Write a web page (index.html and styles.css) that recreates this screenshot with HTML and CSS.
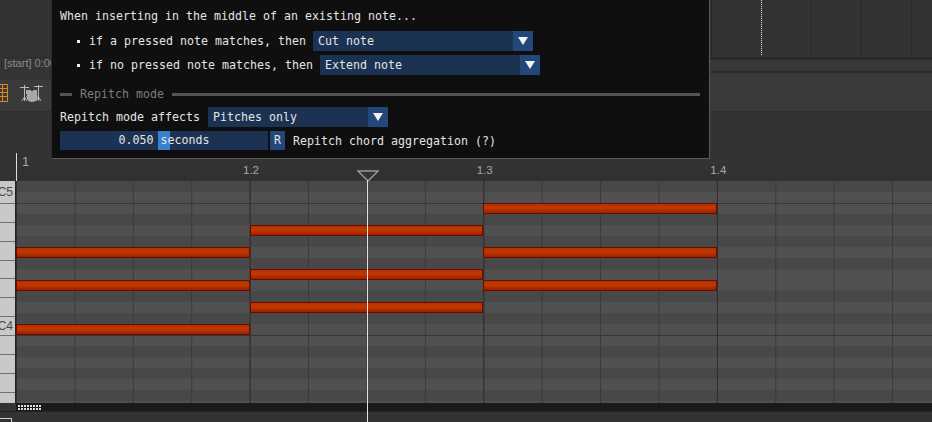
FILE: index.html
```html
<!DOCTYPE html>
<html lang="en">
<head>
    <meta charset="UTF-8">
    <meta name="viewport" content="width=device-width, initial-scale=1.0">
    <title>Piano Roll</title>
    <link rel="stylesheet" href="styles.css">
</head>
<body>
    <div class="app">
        <div class="tracks">
            <i class="tick"></i>
            <i class="tick tick-on"></i>
            <i class="tick"></i>
            <i class="tick"></i>
            <i class="tick"></i>
        </div>
        <div class="band"></div>
        <div class="toolbar">
            <svg class="icon-roll" width="9" height="18" viewBox="0 0 9 18">
                <path d="M0 .5H7.5V17.5H0M0 4.5H7.5M0 8.5H7.5M0 12.5H7.5M2.5 1V17" fill="none" stroke="#d8891c"/>
            </svg>
            <svg class="icon-drums" width="24" height="18" viewBox="0 0 24 18">
                <path d="M0 3.5H9M14 2.5H23M4.5 1V17M18.5 1V17M2 17L4.5 13L7 17M16 17L18.5 13L21 17" fill="none" stroke="#b8b8b8"/>
                <rect x="6" y="6" width="5" height="4" fill="#aaa"/>
                <rect x="13" y="6" width="4" height="4" fill="#aaa"/>
                <circle cx="12" cy="12.5" r="5.5" fill="#a8a8a8"/>
            </svg>
        </div>
        <div class="ruler">
            <span class="ruler-first">1</span>
            <span class="ruler-label">1.2</span>
            <span class="ruler-label">1.3</span>
            <span class="ruler-label">1.4</span>
        </div>
        <div class="roll">
            <div class="keys">
                <div class="key key-top"><span>C5</span></div>
                <div class="key"></div>
                <div class="key"></div>
                <div class="key"></div>
                <div class="key"></div>
                <div class="key"></div>
                <div class="key"></div>
                <div class="key key-c4"><span>C4</span></div>
                <div class="key"></div>
                <div class="key"></div>
                <div class="key"></div>
                <div class="key"></div>
            </div>
            <div class="notes">
                <div class="note bar-1 row-7"></div>
                <div class="note bar-1 row-10"></div>
                <div class="note bar-1 row-14"></div>
                <div class="note bar-2 row-5"></div>
                <div class="note bar-2 row-9"></div>
                <div class="note bar-2 row-12"></div>
                <div class="note bar-3 row-3"></div>
                <div class="note bar-3 row-7"></div>
                <div class="note bar-3 row-10"></div>
            </div>
        </div>
        <div class="scrollbar">
            <div class="grip"></div>
        </div>
        <div class="footer"><div class="footer-box"></div></div>

        <div class="region-box">[start] 0:00</div>

        <div class="playhead">
            <svg width="22" height="12" viewBox="0 0 22 12">
                <path d="M1 1H21L11 11Z" fill="#333" stroke="#9a9a9a" stroke-width="1.4"/>
            </svg>
        </div>

        <div class="popup">
            <div class="line line-first">When inserting in the middle of an existing note...</div>
            <div class="line line-bullet">
                <i class="bullet"></i>
                <span>if a pressed note matches, then</span>
                <div class="combo"><span>Cut note</span><b class="combo-arrow"></b></div>
            </div>
            <div class="line line-bullet">
                <i class="bullet"></i>
                <span>if no pressed note matches, then</span>
                <div class="combo"><span>Extend note</span><b class="combo-arrow"></b></div>
            </div>
            <div class="line separator">
                <i class="sep-short"></i>
                <span>Repitch mode</span>
                <i class="sep-long"></i>
            </div>
            <div class="line">
                <span>Repitch mode affects</span>
                <div class="combo combo-short"><span>Pitches only</span><b class="combo-arrow"></b></div>
            </div>
            <div class="line line-last">
                <div class="slider">0.050 seconds</div>
                <div class="reset">R</div>
                <span class="slider-label">Repitch chord aggregation (?)</span>
            </div>
        </div>
    </div>
</body>
</html>
```

FILE: styles.css
```css
body {
    margin: 0;
    background-color: #333;
}
.app {
    position: relative;
    width: 932px;
    height: 422px;
    overflow: hidden;
    display: flex;
    flex-direction: column;
    background-color: #333;
    font-family: "Liberation Sans", Arial, sans-serif;
}

/* top strip */
.tracks {
    height: 60px;
    box-sizing: border-box;
    padding-left: 711px;
    display: flex;
    gap: 49px;
    border-bottom: 3px solid #2a2a2a;
}
.tick {
    width: 1px;
    height: 56px;
    background: repeating-linear-gradient(to bottom, #1d1d1d 0 1px, transparent 1px 2px);
}
.tick-on {
    background: repeating-linear-gradient(to bottom, #eee 0 1px, transparent 1px 2px);
}
.band {
    height: 11px;
    background-color: #383838;
    border-bottom: 2px solid #2b2b2b;
}
.region-box {
    position: absolute;
    left: 0;
    top: 57px;
    width: 51px;
    height: 23px;
    box-sizing: border-box;
    padding-left: 4px;
    overflow: hidden;
    white-space: nowrap;
    background-color: #343434;
    border-top: 1px solid #2c2c2c;
    font-size: 11px;
    line-height: 11px;
    color: #8a8a8a;
}
.toolbar {
    height: 37px;
    padding-top: 1px;
    background-color: #3a3a3a;
    display: flex;
    align-items: center;
}
.icon-roll {
    margin-right: 11px;
}

/* timeline */
.ruler {
    height: 70px;
    box-sizing: border-box;
    border-top: 1px solid #2e2e2e;
    padding-left: 16px;
    display: flex;
    align-items: flex-end;
    font-size: 11.5px;
    color: #a8a8a8;
    background: linear-gradient(to bottom, #333 50px, #303030);
}
.ruler-first {
    flex: none;
    width: 227px;
    height: 28px;
    box-sizing: border-box;
    border-left: 1px solid #ddd;
    padding: 1px 0 0 5px;
    font-size: 13px;
    line-height: 16px;
}
.ruler-label {
    flex: none;
    width: 233.67px;
    height: 22px;
    line-height: 22px;
}
.roll {
    height: 222px;
    display: flex;
}
.keys {
    width: 15px;
    flex: none;
    border-right: 1px solid #222;
    background-color: #c8c8c8;
    display: flex;
    flex-direction: column;
    overflow: hidden;
}
.key {
    flex: none;
    height: 18.86px;
    box-sizing: border-box;
    border-bottom: 1px solid #707070;
    display: flex;
    align-items: flex-end;
    justify-content: flex-end;
    font-size: 12px;
    line-height: 12px;
    color: #4a4a4a;
}
.key span {
    padding-bottom: 3px;
    padding-right: 2px;
}
.key-top {
    height: 23px;
}
.key-top span {
    padding-bottom: 5px;
}
.notes {
    flex: 1;
    display: grid;
    grid-template-columns: repeat(3, 233.67px);
    grid-template-rows: repeat(20, 11px);
    background-image:
        linear-gradient(to right, #2f2f2f 1px, transparent 1px),
        linear-gradient(to right, #3a3a3a 1px, transparent 1px),
        linear-gradient(to bottom, #363636 1px, transparent 1px),
        linear-gradient(to bottom,
            #505050 0 11px, #484848 11px 22px,
            #505050 22px 33px, #484848 33px 44px,
            #505050 44px 55px, #484848 55px 66px,
            #505050 66px 88px, #484848 88px 99px,
            #505050 99px 110px, #484848 110px 121px,
            #505050 121px 132px);
    background-size: 233.67px 100%, 58.417px 100%, 100% 132px, 100% 132px;
    background-position: 0 0, 0 0, 0 22px, 0 22px;
}
.note {
    box-sizing: border-box;
    border: 1px solid #6a0a02;
    background: linear-gradient(to bottom, #b23200, #c03a00 45%, #9c2000);
}
.bar-1 { grid-column: 1; }
.bar-2 { grid-column: 2; }
.bar-3 { grid-column: 3; }
.row-3 { grid-row: 3; }
.row-5 { grid-row: 5; }
.row-7 { grid-row: 7; }
.row-9 { grid-row: 9; }
.row-10 { grid-row: 10; }
.row-12 { grid-row: 12; }
.row-14 { grid-row: 14; }

/* scrollbar under the roll */
.scrollbar {
    height: 8px;
    margin-left: 16px;
    padding: 2px 0 0 2px;
    box-sizing: border-box;
    background-color: #1a1a1a;
}
.grip {
    width: 24px;
    height: 5px;
    background-image:
        linear-gradient(to bottom, transparent 2px, #1a1a1a 2px 3px, transparent 3px),
        linear-gradient(to right, #ddd 2px, transparent 2px);
    background-size: 100% 100%, 3px 100%;
}
.footer {
    flex: 1;
    background-color: #333;
    border-top: 1px solid #222;
    display: flex;
    align-items: flex-end;
}
.footer-box {
    width: 11px;
    height: 3px;
    border: 1px solid #ccc;
    border-left: none;
    border-bottom: none;
}

/* playhead */
.playhead {
    position: absolute;
    left: 357px;
    top: 170px;
    bottom: 0;
    width: 22px;
}
.playhead svg {
    display: block;
}
.playhead::after {
    content: "";
    position: absolute;
    left: 10px;
    top: 10px;
    bottom: 0;
    width: 1px;
    background-color: #e2e2e2;
}

/* settings popup */
.popup {
    position: absolute;
    left: 51px;
    top: 0;
    width: 659px;
    height: 159px;
    box-sizing: border-box;
    padding: 6px 8px 0;
    display: flex;
    flex-direction: column;
    gap: 4px;
    background-color: #0f0f10;
    border-left: 1px solid #2a2a2a;
    border-right: 1px solid #5a5a5a;
    border-bottom: 1px solid #5a5a5a;
    font-family: "DejaVu Sans Mono", monospace;
    font-size: 11.6px;
    letter-spacing: 0.02px;
    color: #e4e4e4;
    white-space: pre;
}
.line {
    height: 20px;
    display: flex;
    align-items: center;
}
.line-first {
    margin-bottom: 1px;
}
.line-bullet {
    padding-left: 17px;
}
.bullet {
    width: 3px;
    height: 3px;
    background-color: #eee;
    margin-right: 9px;
}
.combo {
    width: 220px;
    height: 20px;
    margin-left: 7px;
    padding-left: 5px;
    box-sizing: border-box;
    display: flex;
    align-items: center;
    justify-content: space-between;
    background-color: #1c3253;
}
.combo-short {
    width: 180px;
    margin-left: 8px;
}
.combo-arrow {
    width: 20px;
    height: 20px;
    position: relative;
    background-color: #23477a;
}
.combo-arrow::after {
    content: "";
    position: absolute;
    left: 5px;
    top: 6px;
    border-left: 5px solid transparent;
    border-right: 5px solid transparent;
    border-top: 8px solid #f2f2f2;
}
.separator {
    margin-top: 5px;
    margin-bottom: -1px;
    color: #7c7c7c;
}
.sep-short {
    width: 12px;
    height: 3px;
    background-color: #545454;
    margin-right: 8px;
}
.sep-long {
    width: 528px;
    height: 3px;
    background-color: #545454;
    margin-left: 8px;
}
.line-last {
    height: 19px;
}
.slider {
    width: 208px;
    height: 19px;
    line-height: 19px;
    text-align: center;
    background-color: #1c3253;
    background-image: linear-gradient(#3b7fd0, #3b7fd0);
    background-size: 12px 100%;
    background-position: 98px 0;
    background-repeat: no-repeat;
}
.reset {
    width: 15px;
    height: 19px;
    line-height: 19px;
    margin-left: 2px;
    text-align: center;
    background-color: #23477a;
}
.slider-label {
    margin-left: 8px;
}
```
